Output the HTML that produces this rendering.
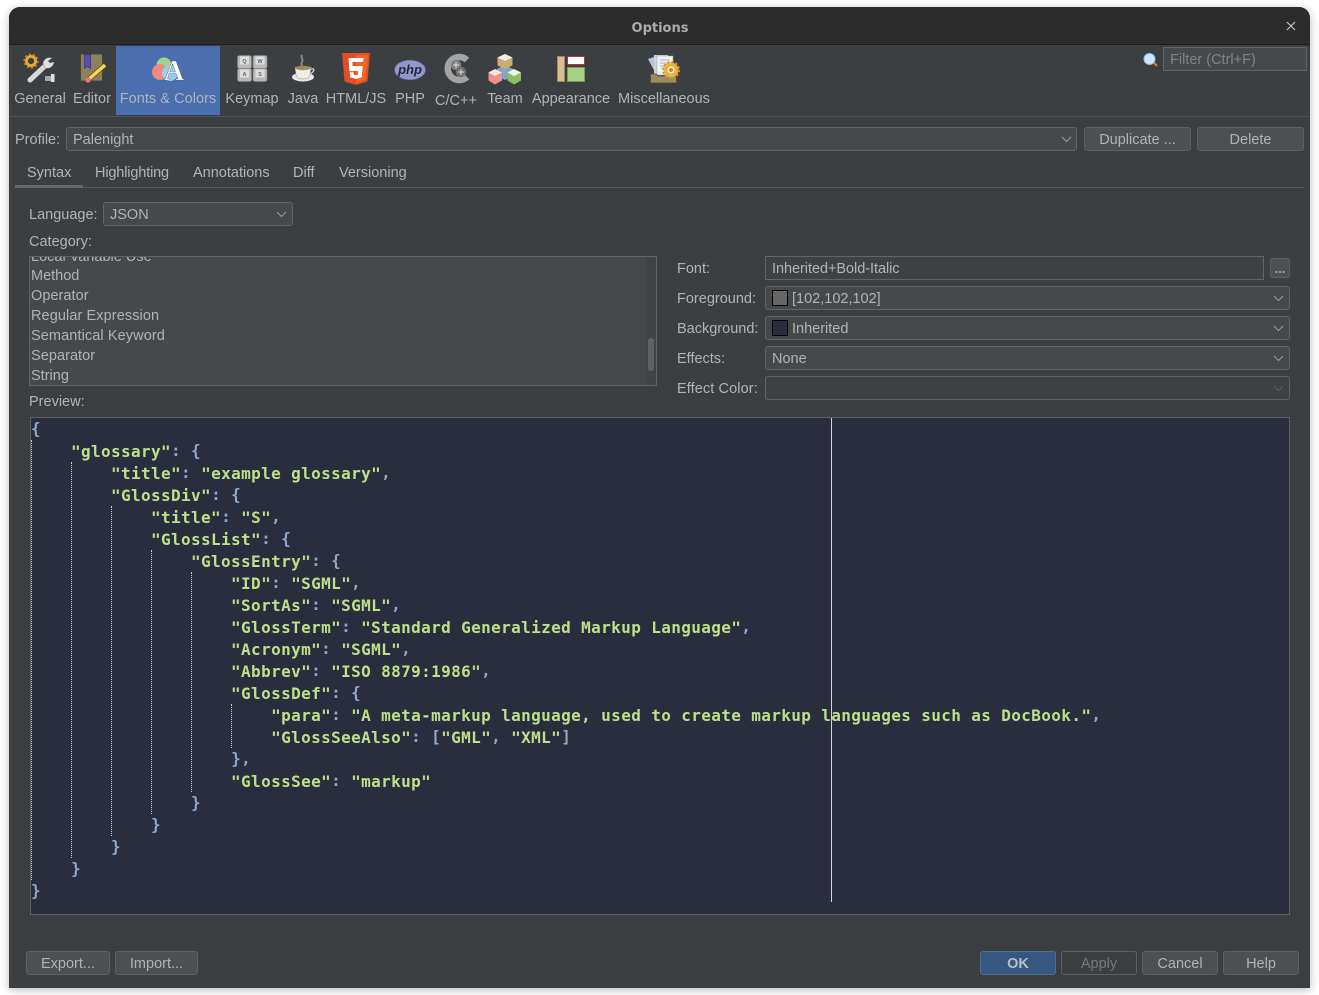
<!DOCTYPE html>
<html><head><meta charset="utf-8"><title>Options</title>
<style>
html,body{margin:0;padding:0;background:#fff;width:1319px;height:995px;overflow:hidden}
body{font-family:"Liberation Sans",sans-serif;font-size:14.5px;color:#b0b4b7;position:relative}
#win{position:absolute;left:9px;top:7px;width:1301px;height:981px;background:#3c3f41;border-radius:11px 11px 0 0;box-shadow:0 2px 9px rgba(0,0,0,.28)}
#tb{position:absolute;left:9px;top:7px;width:1301px;height:38px;background:#2c2c2c;border-radius:11px 11px 0 0;border-bottom:1px solid #1e1e1e;box-sizing:border-box}
.t{position:absolute;line-height:20px;white-space:pre}
.c{transform:translateX(-50%)}
.box{position:absolute;box-sizing:border-box;border:1px solid #646464;background:#45494a}
.r{border-radius:3px}
.btn{position:absolute;box-sizing:border-box;border:1px solid #5e6060;border-radius:3px;background:#4c5052;text-align:center;line-height:24px;color:#b0b4b7}
.ar{position:absolute;width:11px;height:7px}
#ed{position:absolute;left:30px;top:417px;width:1260px;height:498px;background:#292d3e;border:1px solid #606366;box-sizing:border-box}
#code{position:absolute;left:31px;top:419px;margin:0;font-family:"DejaVu Sans Mono","Liberation Mono",monospace;font-size:16px;letter-spacing:.37px;line-height:22px;font-weight:bold;color:#bde188;white-space:pre}
#code i{font-style:normal;font-weight:bold;color:#8fa8cc;position:relative;top:-1px}
.g{position:absolute;width:0;border-left:1px dotted #d0d0d0}
</style></head><body>
<div id="win"></div><div id="tb"></div>
<div class="t c" style="left:660px;top:19px;font-family:'DejaVu Sans',sans-serif;font-weight:bold;font-size:13px;color:#a9adb1;line-height:20px">Options</div>
<svg style="position:absolute;left:1286px;top:21px" width="10" height="10"><path d="M1 1L9 9M9 1L1 9" stroke="#c4c4c4" stroke-width="1.2"/></svg>

<div style="position:absolute;left:116px;top:46px;width:104px;height:69px;background:#4b6eaf"></div>

<svg style="position:absolute;left:0;top:0" width="1319" height="120" viewBox="0 0 1319 120">
<!-- General -->
<g>
<circle cx="31" cy="61" r="4.6" fill="none" stroke="#e8a838" stroke-width="3"/>
<circle cx="31" cy="61" r="6.6" fill="none" stroke="#c98a20" stroke-width="2" stroke-dasharray="2 2.1"/>
<path d="M30 80L45 66" stroke="#d8d8d8" stroke-width="5" stroke-linecap="round"/>
<path d="M52 58a7 7 0 0 0-9 5l2 5a7 7 0 0 0 9-6l-4 1-2-2z" fill="#e2e2e2" stroke="#888" stroke-width=".5"/>
<rect x="45" y="76" width="7" height="5" fill="#a5a5a5"/><rect x="51" y="74" width="3.5" height="8" fill="#e0e0e0"/>
</g>
<!-- Editor -->
<g>
<rect x="80.500" y="54" width="22" height="27" fill="#8b8160" stroke="#4b4530"/>
<path d="M84.500 54.500h6v14l-3-2-3 2z" fill="#5a4bb0" stroke="#2e2570" stroke-width=".6"/>
<path d="M89 79L105 65" stroke="#6f5410" stroke-width="5"/>
<path d="M89 79L105 65" stroke="#f2d860" stroke-width="3.400"/>
<circle cx="88" cy="80" r="2.600" fill="#e87878"/>
</g>
<!-- Fonts & Colors -->
<g>
<circle cx="164" cy="65" r="7.500" fill="#9fd68a"/>
<circle cx="160" cy="72" r="8" fill="#f08a80"/>
<circle cx="170" cy="73" r="8" fill="#9ccbec"/>
<text x="174" y="80" text-anchor="middle" font-family="'Liberation Serif',serif" font-weight="bold" font-size="28" fill="#ffffff" stroke="#2f3f60" stroke-width=".3">A</text>
</g>
<!-- Keymap -->
<g fill="#b8b8b8" stroke="#7f7f7f" stroke-width=".7">
<rect x="237.500" y="55.500" width="14" height="13" rx="2"/><rect x="253" y="55.500" width="14" height="13" rx="2"/>
<rect x="237.500" y="68.500" width="14" height="13" rx="2"/><rect x="253" y="68.500" width="14" height="13" rx="2"/>
<rect x="240" y="56.500" width="9" height="8" fill="#dedede" stroke="none"/><rect x="255.500" y="56.500" width="9" height="8" fill="#dedede" stroke="none"/>
<rect x="240" y="69.500" width="9" height="8" fill="#dedede" stroke="none"/><rect x="255.500" y="69.500" width="9" height="8" fill="#dedede" stroke="none"/>
</g>
<g font-family="'Liberation Sans',sans-serif" font-size="5.500" font-weight="bold" fill="#666" text-anchor="middle">
<text x="244.500" y="63">Q</text><text x="260" y="63">W</text><text x="244.500" y="76">A</text><text x="260" y="76">S</text>
</g>
<!-- Java -->
<g>
<path d="M302 55c-2 3 2 4 0 7s1 3 0 5" stroke="#85888a" stroke-width="2" fill="none"/>
<ellipse cx="303" cy="77" rx="11" ry="4.500" fill="#e8e8e8"/>
<path d="M295 67h16l-1 8q-1 4-7 4t-7-4z" fill="#f0eee8" stroke="#8a8a80" stroke-width=".5"/>
<ellipse cx="303" cy="68" rx="7.500" ry="2.200" fill="#9d8a55"/>
<path d="M311 69h2.500q1.500 2-3 4.500" fill="none" stroke="#d8d8d8" stroke-width="1.200"/>
</g>
<!-- HTML5 -->
<g>
<path d="M342 53h28l-2.500 28.500L356 85l-11.500-3.500z" fill="#e44d26"/>
<path d="M356 55v28l9.500-2.800L368 55z" fill="#f16529"/>
<path d="M348.500 58h15l-.4 4h-10.700l.3 4h10l-1 11.200-5.700 1.800-5.900-1.800-.4-5h3.900l.2 2.400 2.200.7 2.100-.7.3-3.500h-9z" fill="#fff"/>
</g>
<!-- PHP -->
<g>
<ellipse cx="410" cy="70" rx="15.500" ry="9.800" fill="#9497cc" stroke="#5f6296" stroke-width=".7"/>
<text x="410" y="74" text-anchor="middle" font-family="'Liberation Sans',sans-serif" font-style="italic" font-weight="bold" font-size="13" fill="#24263c">php</text>
</g>
<!-- C/C++ -->
<g>
<path d="M467 60a11.500 11.500 0 1 0 0 17" fill="none" stroke="#a4a4a4" stroke-width="6.500"/>
<circle cx="456" cy="65" r="5.200" fill="#808080"/><circle cx="461" cy="72" r="5.200" fill="#707070"/>
<path d="M453 65h6M456 62v6M458 72h6M461 69v6" stroke="#e0e0e0" stroke-width="1"/>
</g>
<!-- Team -->
<g>
<path d="M505 65l8 4v7l-8 4-8-4v-7z" fill="#7fa6c6"/>
<path d="M505 54l7.500 3.500v8L505 69l-7.500-3.500v-8z" fill="#c8ac72"/><path d="M505 54l7.500 3.500-7.500 3.500-7.500-3.500z" fill="#f3efe2"/>
<path d="M495 69l7 3.500v8l-7 4-6.500-4v-8z" fill="#f08e8c"/><path d="M495 69l7 3.500-7 3.500-6.500-3.500z" fill="#fbe4e2"/>
<path d="M514 69l7 3.500v8l-7 4-6.500-4v-8z" fill="#8cc068"/><path d="M514 69l7 3.500-7 3.500-6.500-3.500z" fill="#eef7e0"/>
</g>
<!-- Appearance -->
<g>
<rect x="557.500" y="56.500" width="7" height="25" fill="#d5c094" stroke="#a08a5c"/>
<rect x="567.500" y="56.500" width="17" height="8" fill="#fff" stroke="#b03a30"/>
<rect x="567.500" y="67.500" width="17" height="14" fill="#a8d088" stroke="#7a9c58"/>
</g>
<!-- Misc -->
<g>
<path d="M648 59l9-3 6 15-7 3z" fill="#b8c4d0"/>
<rect x="654" y="55" width="14" height="19" fill="#c9d3dc"/>
<rect x="657" y="56" width="16" height="19" fill="#eef1f4" stroke="#9aa4ae" stroke-width=".5"/>
<path d="M660 60h10M660 63h10M660 66h6" stroke="#a9b2ba"/>
<path d="M650.500 74h6l1 2h19v7h-26z" fill="#9c8c5f" stroke="#4f4630" stroke-width=".7"/>
<circle cx="671" cy="70" r="5.500" fill="#fff3d0" stroke="#f0b040" stroke-width="3.800"/>
<circle cx="671" cy="70" r="8" fill="none" stroke="#d8962a" stroke-width="2" stroke-dasharray="2.200 2"/>
<circle cx="671" cy="70" r="2" fill="#c98a20"/>
</g>
<!-- search -->
<g>
<path d="M1153 62l4 4" stroke="#d88a10" stroke-width="2"/>
<circle cx="1149.500" cy="59" r="5.500" fill="#cfe6ff" stroke="#8fc0f0" stroke-width="1"/>
</g>
</svg>

<div class="t c" style="left:40px;top:89px">General</div>
<div class="t c" style="left:92px;top:89px">Editor</div>
<div class="t c" style="left:168px;top:89px;letter-spacing:.05px">Fonts &amp; Colors</div>
<div class="t c" style="left:252px;top:89px">Keymap</div>
<div class="t c" style="left:303px;top:89px">Java</div>
<div class="t c" style="left:356px;top:89px">HTML/JS</div>
<div class="t c" style="left:410px;top:89px">PHP</div>
<div class="t c" style="left:456px;top:91px">C/C++</div>
<div class="t c" style="left:505px;top:89px">Team</div>
<div class="t c" style="left:571px;top:89px">Appearance</div>
<div class="t c" style="left:664px;top:89px">Miscellaneous</div>

<div class="box" style="left:1163px;top:47px;width:144px;height:24px;background:#45494a"></div>
<div class="t" style="left:1170px;top:50px;color:#7f8385">Filter (Ctrl+F)</div>

<div style="position:absolute;left:10px;top:116px;width:1299px;height:1px;background:#515355"></div>

<div class="t" style="left:15px;top:130px">Profile:</div>
<div class="box r" style="left:66px;top:127px;width:1011px;height:24px"></div>
<div class="t" style="left:73px;top:130px">Palenight</div>
<svg class="ar" style="left:1061px;top:136px" viewBox="0 0 11 7"><path d="M1 1l4.500 4.500L10 1" fill="none" stroke="#9a9c9e"/></svg>
<div class="btn" style="left:1084px;top:127px;width:107px;height:24px">Duplicate ...</div>
<div class="btn" style="left:1197px;top:127px;width:107px;height:24px">Delete</div>

<div class="t" style="left:27px;top:163px">Syntax</div>
<div class="t" style="left:95px;top:163px;letter-spacing:-.15px">Highlighting</div>
<div class="t" style="left:193px;top:163px">Annotations</div>
<div class="t" style="left:293px;top:163px">Diff</div>
<div class="t" style="left:339px;top:163px">Versioning</div>
<div style="position:absolute;left:15px;top:187px;width:1289px;height:1px;background:#55585a"></div>
<div style="position:absolute;left:15px;top:185px;width:68px;height:3px;background:#646668"></div>

<div class="t" style="left:29px;top:205px">Language:</div>
<div class="box r" style="left:103px;top:202px;width:190px;height:24px"></div>
<div class="t" style="left:110px;top:205px">JSON</div>
<svg class="ar" style="left:276px;top:211px" viewBox="0 0 11 7"><path d="M1 1l4.500 4.500L10 1" fill="none" stroke="#9a9c9e"/></svg>
<div class="t" style="left:29px;top:232px">Category:</div>

<div class="box" style="left:29px;top:256px;width:628px;height:130px;overflow:hidden">
<div style="position:absolute;right:0;top:0;width:10px;height:128px;background:#414446"></div>
<div style="position:absolute;left:618px;top:81px;width:6px;height:33px;border-radius:3px;background:#5f6366"></div>
<div class="t" style="left:1px;top:-10px">Local Variable Use</div>
<div class="t" style="left:1px;top:9px">Method</div>
<div class="t" style="left:1px;top:29px;letter-spacing:.05px">Operator</div>
<div class="t" style="left:1px;top:49px;letter-spacing:.09px">Regular Expression</div>
<div class="t" style="left:1px;top:69px;letter-spacing:.1px">Semantical Keyword</div>
<div class="t" style="left:1px;top:89px;letter-spacing:.05px">Separator</div>
<div class="t" style="left:1px;top:109px">String</div>
</div>

<div class="t" style="left:677px;top:259px">Font:</div>
<div class="t" style="left:677px;top:289px">Foreground:</div>
<div class="t" style="left:677px;top:319px">Background:</div>
<div class="t" style="left:677px;top:349px">Effects:</div>
<div class="t" style="left:677px;top:379px;letter-spacing:.1px">Effect Color:</div>

<div class="box" style="left:765px;top:256px;width:499px;height:24px;background:#3f4244"></div>
<div class="t" style="left:772px;top:259px;letter-spacing:-.05px">Inherited+Bold-Italic</div>
<div class="btn" style="left:1270px;top:258px;width:20px;height:20px;line-height:20px;color:#b0a888;font-size:13px;font-weight:bold">...</div>

<div class="box r" style="left:765px;top:286px;width:525px;height:24px"></div>
<div style="position:absolute;left:772px;top:290px;width:16px;height:16px;box-sizing:border-box;border:1px solid #000;background:#666"></div>
<div class="t" style="left:792px;top:289px">[102,102,102]</div>
<svg class="ar" style="left:1273px;top:295px" viewBox="0 0 11 7"><path d="M1 1l4.500 4.500L10 1" fill="none" stroke="#9a9c9e"/></svg>

<div class="box r" style="left:765px;top:316px;width:525px;height:24px"></div>
<div style="position:absolute;left:772px;top:320px;width:16px;height:16px;box-sizing:border-box;border:1px solid #000;background:#292d3e"></div>
<div class="t" style="left:792px;top:319px">Inherited</div>
<svg class="ar" style="left:1273px;top:325px" viewBox="0 0 11 7"><path d="M1 1l4.500 4.500L10 1" fill="none" stroke="#9a9c9e"/></svg>

<div class="box r" style="left:765px;top:346px;width:525px;height:24px"></div>
<div class="t" style="left:772px;top:349px">None</div>
<svg class="ar" style="left:1273px;top:355px" viewBox="0 0 11 7"><path d="M1 1l4.500 4.500L10 1" fill="none" stroke="#9a9c9e"/></svg>

<div class="box r" style="left:765px;top:376px;width:525px;height:24px;background:#3f4244"></div>
<svg class="ar" style="left:1273px;top:385px" viewBox="0 0 11 7"><path d="M1 1l4.500 4.500L10 1" fill="none" stroke="#5c5f61"/></svg>

<div class="t" style="left:29px;top:392px">Preview:</div>

<div id="ed"></div>
<div style="position:absolute;left:831px;top:418px;width:1px;height:484px;background:#d4d4d8"></div>
<div class="g" style="left:31px;top:440px;height:440px"></div>
<div class="g" style="left:71px;top:462px;height:396px"></div>
<div class="g" style="left:111px;top:506px;height:330px"></div>
<div class="g" style="left:151px;top:550px;height:264px"></div>
<div class="g" style="left:191px;top:572px;height:220px"></div>
<div class="g" style="left:231px;top:704px;height:44px"></div>
<pre id="code"><i>{</i>
    "glossary"<i>: {</i>
        "title"<i>:</i> "example glossary"<i>,</i>
        "GlossDiv"<i>: {</i>
            "title"<i>:</i> "S"<i>,</i>
            "GlossList"<i>: {</i>
                "GlossEntry"<i>: {</i>
                    "ID"<i>:</i> "SGML"<i>,</i>
                    "SortAs"<i>:</i> "SGML"<i>,</i>
                    "GlossTerm"<i>:</i> "Standard Generalized Markup Language"<i>,</i>
                    "Acronym"<i>:</i> "SGML"<i>,</i>
                    "Abbrev"<i>:</i> "ISO 8879:1986"<i>,</i>
                    "GlossDef"<i>: {</i>
                        "para"<i>:</i> "A meta-markup language, used to create markup languages such as DocBook."<i>,</i>
                        "GlossSeeAlso"<i>: [</i>"GML"<i>,</i> "XML"<i>]</i>
                    <i>},</i>
                    "GlossSee"<i>:</i> "markup"
                <i>}</i>
            <i>}</i>
        <i>}</i>
    <i>}</i>
<i>}</i></pre>

<div class="btn" style="left:26px;top:951px;width:84px;height:24px">Export...</div>
<div class="btn" style="left:115px;top:951px;width:83px;height:24px">Import...</div>
<div class="btn" style="left:980px;top:951px;width:76px;height:24px;background:#365880;border-color:#4c708c;font-weight:bold;color:#b9bec4">OK</div>
<div class="btn" style="left:1061px;top:951px;width:76px;height:24px;background:#3c3f41;color:#777">Apply</div>
<div class="btn" style="left:1142px;top:951px;width:76px;height:24px">Cancel</div>
<div class="btn" style="left:1223px;top:951px;width:76px;height:24px">Help</div>
</body></html>
